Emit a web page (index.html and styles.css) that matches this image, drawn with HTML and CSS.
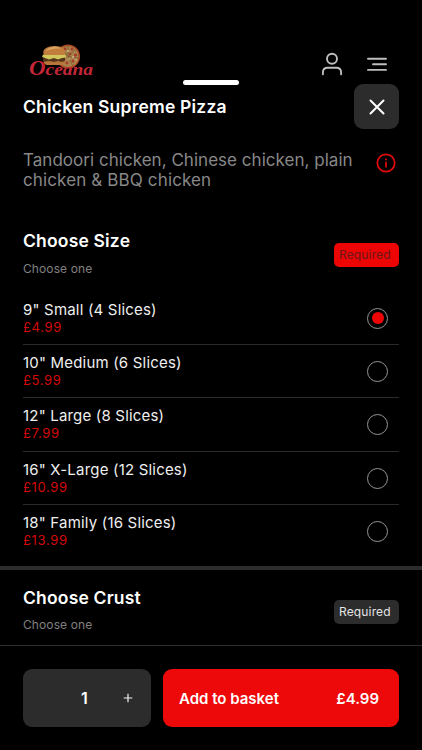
FILE: index.html
```html
<!DOCTYPE html>
<html lang="en">
<head>
<meta charset="utf-8">
<title>Chicken Supreme Pizza</title>
<link rel="stylesheet" href="styles.css">
</head>
<body>
<div class="screen">
  <header class="topbar">
    <svg class="logo" width="72" height="40" viewBox="0 0 72 40" role="img" aria-label="Oceana">
      <circle cx="42" cy="16.500" r="12" fill="#b04a25"/>
      <circle cx="42" cy="16.500" r="10.500" fill="#a8824a"/>
      <path d="M42 16.500 35 8M42 16.500 42 5M42 16.500 50 9M42 16.500 53 18M42 16.500 47 26" stroke="#6b4a2a" stroke-width=".6"/>
      <g fill="#a63a2b"><circle cx="39" cy="9" r="1.400"/><circle cx="46" cy="9" r="1.500"/><circle cx="49.500" cy="15" r="1.600"/><circle cx="44" cy="14" r="1.300"/><circle cx="47" cy="21" r="1.500"/><circle cx="41" cy="23" r="1.400"/></g>
      <g fill="#dabf94"><circle cx="42" cy="11" r=".9"/><circle cx="47" cy="17" r=".9"/><circle cx="50" cy="20" r=".8"/><circle cx="43" cy="19" r=".8"/></g>
      <path d="M18 20h21c1 3-1 5-5 5H22c-3 0-5-2-4-5z" fill="#b8763a"/>
      <path d="M17 18h22v3l-3 1-4-1-4 1-5-1-6 1z" fill="#55351a"/>
      <path d="M17 14.500h22l1 2.500-4 1-4 1.500-4-1.500-5 1.500-4-1.500-3-1z" fill="#d2c75c"/>
      <path d="M18 15c-3-6 4-9 11-9 8 0 12 4 9 9z" fill="#c27e3d"/>
      <path d="M20 11c2-4 11-6 15-2-5-1-10 0-15 2z" fill="#dda665"/>
      <text class="logo-text" x="3" y="34.500" textLength="64" lengthAdjust="spacingAndGlyphs"><tspan class="logo-initial">O</tspan>ceana</text>
    </svg>
    <nav class="actions">
      <svg width="22" height="24" viewBox="0 0 22 24" fill="none" stroke="#bebebe" stroke-width="1.900" stroke-linecap="round"><circle cx="11" cy="6.700" r="5"/><path d="M1.900 22.200V20.500Q1.900 15.800 6.600 15.800H15.400Q20.100 15.800 20.100 20.500V22.200"/></svg>
      <svg width="22" height="16" viewBox="0 0 22 16" stroke="#bebebe" stroke-width="1.900" stroke-linecap="round"><path d="M2 2.700H20M7 8.300H20M2 13.900H20"/></svg>
    </nav>
    <span class="handle"></span>
  </header>

  <div class="title-row">
    <h1 class="title">Chicken Supreme Pizza</h1>
    <button class="close" aria-label="Close"><svg width="17" height="17" viewBox="0 0 17 17" stroke="#fff" stroke-width="2" stroke-linecap="round"><path d="M2.500 2.500 15.500 15.500M15.500 2.500 2.500 15.500"/></svg></button>
  </div>

  <div class="summary">
    <p class="description">Tandoori chicken, Chinese chicken, plain<br><span class="second-line">chicken &amp; BBQ chicken</span></p>
    <svg class="info" width="20" height="20" viewBox="0 0 20 20" fill="none" stroke="#e60a0a" stroke-width="1.700"><circle cx="10" cy="10" r="8.700"/><path d="M10 8.700V14.500M10 5.500V7.300"/></svg>
  </div>

  <section class="group">
    <div><h2 class="heading">Choose Size</h2><p class="hint">Choose one</p></div>
    <span class="badge active">Required</span>
  </section>

  <ul class="options">
    <li class="option"><div><p class="name">9" Small (4 Slices)</p><p class="price">£4.99</p></div><span class="radio checked"></span></li>
    <li class="option"><div><p class="name">10" Medium (6 Slices)</p><p class="price">£5.99</p></div><span class="radio"></span></li>
    <li class="option"><div><p class="name">12" Large (8 Slices)</p><p class="price">£7.99</p></div><span class="radio"></span></li>
    <li class="option"><div><p class="name">16" X-Large (12 Slices)</p><p class="price">£10.99</p></div><span class="radio"></span></li>
    <li class="option"><div><p class="name">18" Family (16 Slices)</p><p class="price">£13.99</p></div><span class="radio"></span></li>
  </ul>

  <section class="group crust">
    <div><h2 class="heading">Choose Crust</h2><p class="hint">Choose one</p></div>
    <span class="badge">Required</span>
  </section>

  <footer class="footer">
    <div class="stepper"><span class="count">1</span><svg class="plus" width="10" height="10" viewBox="0 0 10 10" stroke="#f3f3f3" stroke-width="1.200"><path d="M5 .7V9.300M.7 5H9.300"/></svg></div>
    <button class="basket"><span>Add to basket</span><span>£4.99</span></button>
  </footer>
</div>
</body>
</html>
```
FILE: styles.css
```css
* { box-sizing: border-box; }
body { margin: 0; background: #000; font-family: Inter, "Liberation Sans", sans-serif; }
h1, h2, p, ul { margin: 0; padding: 0; }
button { border: 0; font: inherit; color: #fff; }
svg { display: block; flex: none; }
.screen { width: 422px; height: 750px; overflow: hidden; display: flex; flex-direction: column; }
.topbar { position: relative; height: 84px; padding: 40px 34px 0 26px; display: flex; justify-content: space-between; align-items: flex-start; flex: none; }
.logo-text { font: italic bold 17px "Liberation Serif", serif; fill: #c32737; }
.logo-initial { font-size: 20px; }
.actions { display: flex; align-items: center; gap: 23px; padding-top: 12px; }
.handle { position: absolute; left: 183px; top: 80px; width: 56px; height: 5px; border-radius: 3px; background: #fff; }
.title-row { height: 45px; padding: 0 23px; display: flex; justify-content: space-between; align-items: center; flex: none; }
.title { font-size: 17.500px; font-weight: 600; line-height: 22px; letter-spacing: .2px; color: #fff; }
.close { width: 45px; height: 45px; padding: 0; border-radius: 9px; background: #2c2c2c; display: grid; place-items: center; }
.summary { height: 103px; padding: 21px 26px 0 23px; display: flex; justify-content: space-between; align-items: flex-start; flex: none; }
.description { font-size: 17px; line-height: 20px; letter-spacing: .03px; color: #888; white-space: nowrap; }
.second-line { letter-spacing: .13px; }
.info { margin-top: 3px; }
.group { height: 59px; padding: 0 23px; display: flex; justify-content: space-between; align-items: flex-start; flex: none; }
.heading { font-size: 17.500px; font-weight: 600; line-height: 18px; letter-spacing: .18px; color: #fff; }
.hint { margin-top: 11px; font-size: 12px; line-height: 15px; color: #808080; letter-spacing: .1px; }
.crust .hint { margin-top: 10px; }
.badge { width: 65px; height: 24px; margin-top: 11px; padding-left: 5px; border-radius: 5px; background: #2c2c2c; color: #e4e4e4; font-size: 12px; line-height: 24px; letter-spacing: .15px; }
.badge.active { background: #ed0505; color: #6b1717; }
.options { list-style: none; height: 275px; padding: .6px 23px 0; flex: none; }
.option { height: 53.350px; padding: 8px 11px 0 0; display: flex; justify-content: space-between; align-items: flex-start; border-bottom: 1px solid #2b2b2b; }
.option:last-child { border-bottom: 0; }
.name { font-size: 15px; line-height: 20px; letter-spacing: .19px; color: #efefef; }
.price { font-size: 13px; line-height: 15px; letter-spacing: .65px; color: #d60808; }
.radio { width: 21px; height: 21px; margin-top: 8px; border: 1px solid #969696; border-radius: 50%; display: grid; place-items: center; }
.checked::after { content: ""; width: 12px; height: 12px; border-radius: 50%; background: #ed0505; }
.crust { height: 79px; padding-top: 19px; border-top: 4px solid #2c2c2c; }
.footer { flex: 1; border-top: 1px solid #2c2c2c; padding: 23px 23px 0; display: flex; gap: 12px; }
.stepper { width: 128px; height: 58px; border-radius: 9px; background: #2c2c2c; color: #fff; display: flex; align-items: center; padding-left: 58px; }
.count { width: 42px; font-size: 16px; font-weight: 600; line-height: 20px; }
.basket { flex: 1; height: 58px; border-radius: 9px; background: #ed080a; padding: 0 20px 0 16px; display: flex; align-items: center; justify-content: space-between; font-size: 15px; font-weight: 600; }
```
